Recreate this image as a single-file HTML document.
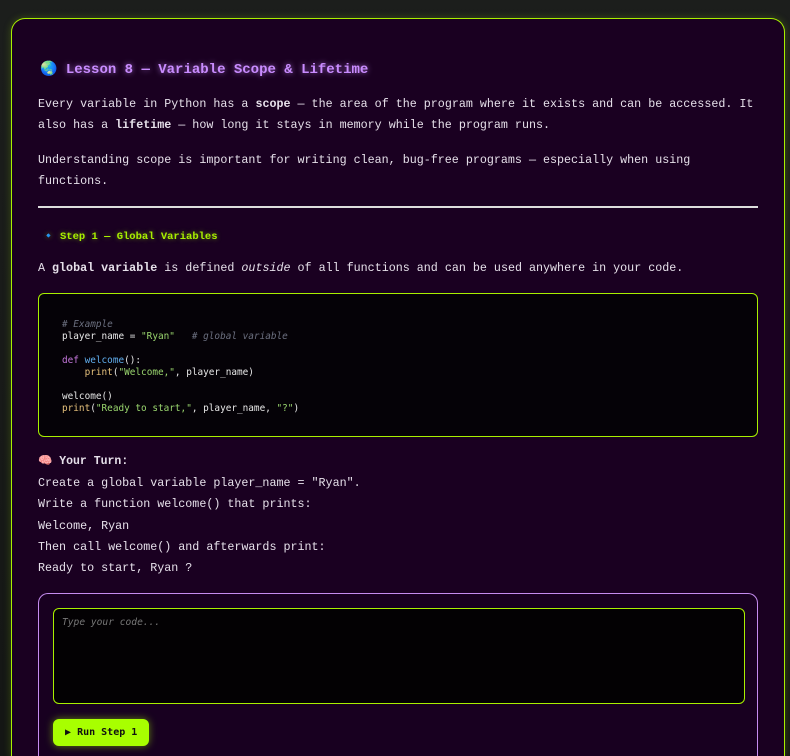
<!DOCTYPE html>
<html><head><meta charset="utf-8"><style>
html,body{margin:0;padding:0;width:790px;height:756px;overflow:hidden;}
body{background:linear-gradient(#1c1e1c,#141614);font-family:"Liberation Mono","DejaVu Sans Mono",monospace;color:#e6e0ea;position:relative;}
.card{position:absolute;left:11px;top:18px;width:772px;height:738px;border:1.5px solid #a8f000;border-bottom:none;border-radius:14px 14px 0 0;background:#1a0021;box-shadow:0 0 8px rgba(168,240,0,.25);}
.abs{position:absolute;white-space:pre;}
h1{position:absolute;left:40px;top:61px;margin:0;font-size:14px;color:#c98cff;font-weight:bold;text-shadow:0 0 6px rgba(200,140,255,.7);white-space:pre;}
.p{font-size:11.7px;line-height:21px;left:38px;}
.hr{position:absolute;left:38px;top:206px;width:720px;height:2px;background:#ddd;}
.step{left:42px;top:229px;font-size:10.5px;font-weight:bold;color:#a8f000;text-shadow:0 0 5px rgba(168,240,0,.5);}
.code{position:absolute;left:38px;top:293px;width:718px;height:142px;border:1px solid #a8f000;border-radius:6px;background:#050207;}
.code pre{position:absolute;left:23px;top:25px;margin:0;font-family:"DejaVu Sans Mono",monospace;font-size:9.4px;line-height:12px;color:#e8e8e8;}
.c{color:#6c7080;font-style:italic}.s{color:#9ad66e}.k{color:#c678dd}.f{color:#61afef}.b{color:#e5c07b}
.box{position:absolute;left:38px;top:593px;width:718px;height:163px;border:1px solid #c58cf0;border-bottom:none;border-radius:10px 10px 0 0;background:#180020;}
.ta{position:absolute;left:14px;top:14px;width:690px;height:94px;border:1px solid #a8f000;border-radius:6px;background:#030103;}
.ta span{position:absolute;left:8px;top:8px;font-size:9.6px;color:#777;font-style:italic;font-family:"DejaVu Sans Mono",monospace;}
.btn{position:absolute;left:14px;top:125px;width:96px;height:27px;border-radius:6px;background:#a8ff00;color:#111;font-weight:bold;font-size:10px;line-height:27px;box-shadow:0 0 8px rgba(168,255,0,.5);font-family:"DejaVu Sans Mono",monospace;}
</style></head><body>
<div class="card"></div>
<h1><span style="text-shadow:none">🌏</span> Lesson 8 — Variable Scope &amp; Lifetime</h1>
<div class="abs p" style="top:94px">Every variable in Python has a <b>scope</b> — the area of the program where it exists and can be accessed. It
also has a <b>lifetime</b> — how long it stays in memory while the program runs.</div>
<div class="abs p" style="top:150px">Understanding scope is important for writing clean, bug-free programs — especially when using
functions.</div>
<div class="hr"></div>
<div class="abs step"><span style="color:#4a8fe0;display:inline-block;width:18px">🔹</span>Step 1 — Global Variables</div>
<div class="abs p" style="top:258px">A <b>global variable</b> is defined <i>outside</i> of all functions and can be used anywhere in your code.</div>
<div class="code"><pre><span class="c"># Example</span>
player_name = <span class="s">"Ryan"</span>   <span class="c"># global variable</span>

<span class="k">def</span> <span class="f">welcome</span>():
    <span class="b">print</span>(<span class="s">"Welcome,"</span>, player_name)

welcome()
<span class="b">print</span>(<span class="s">"Ready to start,"</span>, player_name, <span class="s">"?"</span>)</pre></div>
<div class="abs p" style="top:451px;font-weight:bold;font-size:11.5px">🧠 Your Turn:</div>
<div class="abs p" style="top:473px;line-height:21.3px">Create a global variable player_name = "Ryan".
Write a function welcome() that prints:
Welcome, Ryan
Then call welcome() and afterwards print:
Ready to start, Ryan ?</div>
<div class="box"><div class="ta"><span>Type your code...</span></div>
<div class="btn">&nbsp;&nbsp;▶ Run Step 1</div></div>
</body></html>
